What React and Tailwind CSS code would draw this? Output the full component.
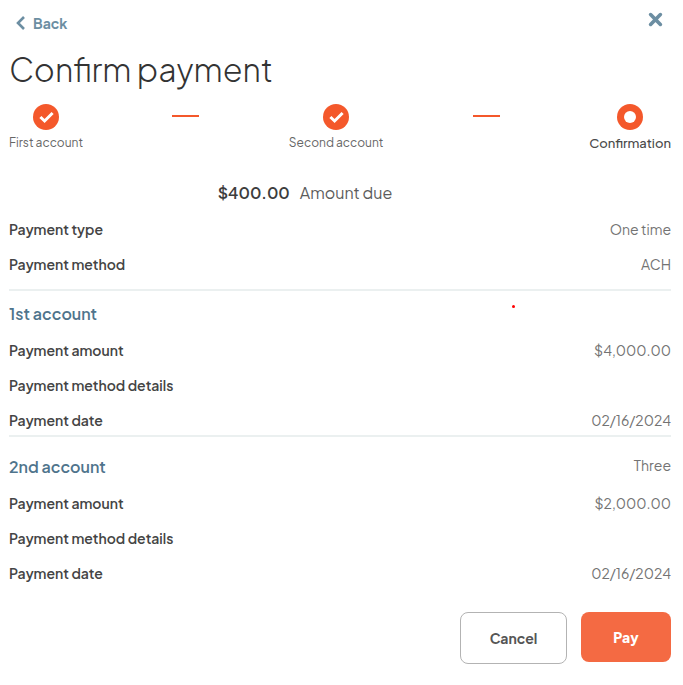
import React from 'react';
import { clsx } from 'clsx';

const steps = [
    { label: 'First account', done: true },
    { label: 'Second account', done: true },
    { label: 'Confirmation', done: false },
];

const summary = [
    { label: 'Payment type', value: 'One time' },
    { label: 'Payment method', value: 'ACH' },
];

const accounts = [
    {
        title: '1st account',
        rows: [
            { label: 'Payment amount', value: '$4,000.00' },
            { label: 'Payment method details', value: '' },
            { label: 'Payment date', value: '02/16/2024' },
        ],
    },
    {
        title: '2nd account',
        note: 'Three',
        rows: [
            { label: 'Payment amount', value: '$2,000.00' },
            { label: 'Payment method details', value: '' },
            { label: 'Payment date', value: '02/16/2024' },
        ],
    },
];

const StepIcon = ({ done }) => (
    <svg className="size-[26px]" viewBox="0 0 26 26" fill="none" aria-hidden="true">
        <circle cx="13" cy="13" r="13" fill="#f4582b" />
        {done ? (
            <path d="M7.4 13 11.6 17 19.6 9" stroke="#fff" strokeWidth="3" />
        ) : (
            <circle cx="13" cy="13" r="6" fill="#fff" />
        )}
    </svg>
);

const Stepper = () => (
    <ol className="flex justify-between mt-3">
        {steps.map((step, i) => (
            <React.Fragment key={step.label}>
                {i > 0 && <li aria-hidden="true" className="w-[27px] h-[2px] mt-[11px] bg-[#f4582b]" />}
                <li
                    className={clsx(
                        'flex flex-col items-center gap-1 leading-[18px]',
                        step.done ? 'text-[12px] text-[#666]' : 'text-[13px] font-medium text-[#4a4a4a]'
                    )}
                >
                    <StepIcon done={step.done} />
                    {step.label}
                </li>
            </React.Fragment>
        ))}
    </ol>
);

const Rows = ({ rows }) => (
    <dl className="flex flex-col gap-[11px]">
        {rows.map((row) => (
            <div key={row.label} className="flex items-center justify-between h-6 text-[14px]">
                <dt className="font-semibold text-[#444]">{row.label}</dt>
                <dd className="text-[#737373]">{row.value}</dd>
            </div>
        ))}
    </dl>
);

const Account = ({ title, note, rows }) => (
    <section className="border-t-2 border-[#ebf0f0] pt-[7px] pb-[3px] last-of-type:pt-[14px]">
        <div className="flex items-center justify-between h-8 mb-2">
            <h2 className="text-[16px] font-semibold text-[#4f748c]">{title}</h2>
            {note && <span className="self-start text-[14px] leading-7 text-[#737373]">{note}</span>}
        </div>
        <Rows rows={rows} />
    </section>
);

const App = () => {
    return (
        <main className="min-h-screen bg-white pl-[9px] pr-3 pt-2 pb-5 font-['Plus_Jakarta_Sans','Inter',sans-serif]">
            <header className="flex items-start justify-between">
                <a href="#" className="flex items-center gap-2 pl-[7px] h-[30px] text-[14px] font-bold text-[#6c8ea2]">
                    <svg className="w-[9px] h-[14px]" viewBox="0 0 9 14" fill="none" stroke="currentColor" strokeWidth="2.6" aria-hidden="true">
                        <path d="M8 1 2 7l6 6" />
                    </svg>
                    Back
                </a>
                <button type="button" aria-label="Close" className="mr-2 mt-1 text-[#6c8ea2]">
                    <svg className="size-[15px]" viewBox="0 0 15 15" fill="none" stroke="currentColor" strokeWidth="3.6" strokeLinecap="round" aria-hidden="true">
                        <path d="m2.6 2.6 9.8 9.8m0-9.8-9.8 9.8" />
                    </svg>
                </button>
            </header>

            <h1 className="mt-2 text-[32px] leading-[46px] font-light text-[#333]">Confirm payment</h1>

            <Stepper />

            <p className="flex items-center justify-center gap-[10px] mt-[29px] mb-3 h-6 pr-[70px] text-[16px] text-[#5c5c5c]">
                <strong className="font-semibold text-[#3d3d3d]">$400.00</strong>
                Amount due
            </p>

            <Rows rows={summary} />

            <div className="relative flex flex-col mt-[13px]">
                {accounts.map((account) => (
                    <Account key={account.title} {...account} />
                ))}
                <span className="absolute left-[76%] top-4 size-[3px] rounded-full bg-[#f00]" />
            </div>

            <div className="flex items-start justify-end gap-[14px] mt-6 text-[14px]">
                <button type="button" className="w-[107px] h-[52px] rounded-lg border border-[#b3b3b3] bg-white font-bold text-[#555]">
                    Cancel
                </button>
                <button type="button" className="w-[90px] h-[50px] rounded-lg bg-[#f46a43] font-extrabold text-white">
                    Pay
                </button>
            </div>
        </main>
    );
};

export default App;
